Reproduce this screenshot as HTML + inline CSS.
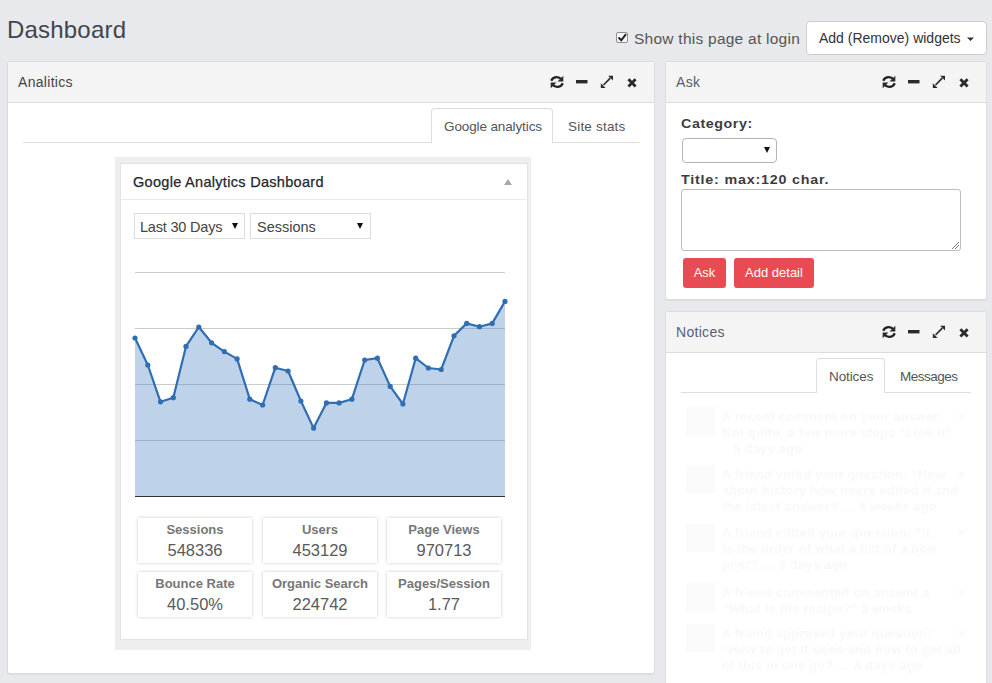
<!DOCTYPE html>
<html><head><meta charset="utf-8">
<style>
*{box-sizing:border-box;margin:0;padding:0}
html,body{width:992px;height:683px;overflow:hidden;background:#e8e9ec;font-family:"Liberation Sans",sans-serif;color:#333}
.abs{position:absolute;white-space:nowrap}
#title{left:7px;top:16px;font-size:24px;color:#41454d;line-height:28px;letter-spacing:0.2px}
#chk{left:616px;top:32px;width:12px;height:11px;border:1px solid #8f8f8f;border-radius:2px;background:#f6f6f6}
#showlbl{left:634px;top:30px;font-size:15.5px;color:#555;line-height:18px;letter-spacing:0.25px}
#addbtn{left:806px;top:21px;width:181px;height:34px;background:#fff;border:1px solid #ccc;border-radius:4px;font-size:14px;color:#333;line-height:18px;padding:7px 0 0 12px}
.panel{position:absolute;background:#fff;border:1px solid #dcdde0;border-radius:3px;box-shadow:0 1px 1px rgba(0,0,0,.05)}
.phead{position:absolute;left:0;top:0;right:0;height:41px;background:#f4f4f4;border-bottom:1px solid #dcdcdc;border-radius:3px 3px 0 0}
.ptitle{position:absolute;font-size:14px;line-height:16px;color:#444;letter-spacing:0.3px}
.tabline{position:absolute;height:1px;background:#dedede}
.tab{position:absolute;font-size:13.5px;line-height:16px;color:#555;letter-spacing:0.2px}
.tabbox{position:absolute;background:#fff;border:1px solid #dedede;border-bottom:none;border-radius:4px 4px 0 0}
.gabox{position:absolute;background:#fff;border:1px solid #e3e3e3}
.sel{position:absolute;background:#fff;border:1px solid #ddd}
.seltxt{position:absolute;font-size:14.5px;line-height:16px;color:#444}
.arrow{position:absolute;width:0;height:0;border-left:3.5px solid transparent;border-right:3.5px solid transparent;border-top:6px solid #111}
.stat{position:absolute;width:114px;height:45px;background:#fff;box-shadow:0 0 3px rgba(0,0,0,.22);text-align:center}
.stat .l{position:absolute;left:0;right:0;top:4px;font-size:13px;line-height:16px;font-weight:bold;color:#777}
.stat .v{position:absolute;left:0;right:0;top:22px;font-size:16.5px;line-height:20px;color:#5a5a5a}
.flbl{position:absolute;font-size:13px;font-weight:bold;color:#3c3c3c;line-height:16px;letter-spacing:0.5px;transform:scaleX(1.1);transform-origin:0 0}
.btnred{position:absolute;background:#e84b52;border-radius:3px;color:#fff;font-size:13px;line-height:16px;text-align:center}
.faint{position:absolute;background:#fbfbfb}
.ftxt{font-size:12.5px;line-height:16px;font-weight:bold;color:#f9f9f9;letter-spacing:0.4px}
</style></head><body>
<div id="title" class="abs">Dashboard</div>
<div id="chk" class="abs"></div>
<div id="showlbl" class="abs">Show this page at login</div>
<div id="addbtn" class="abs">Add (Remove) widgets</div>

<!-- Analytics panel -->
<div class="panel" style="left:7px;top:61px;width:648px;height:613px">
  <div class="phead"></div>
</div>
<div class="ptitle abs" style="left:18px;top:74px">Analitics</div>
<div class="tabline" style="left:23px;top:142px;width:616px"></div>
<div class="tabbox" style="left:431px;top:108px;width:122px;height:35px"></div>
<div class="tab abs" style="left:444px;top:119px;letter-spacing:-0.12px">Google analytics</div>
<div class="tab abs" style="left:568px;top:119px">Site stats</div>

<!-- GA widget -->
<div class="abs" style="left:115px;top:157px;width:416px;height:493px;background:#eeeeee"></div>
<div class="gabox" style="left:120px;top:163px;width:408px;height:477px"></div>
<div class="abs" style="left:121px;top:199px;width:405px;height:1px;background:#eaeaea"></div>
<div class="abs" style="left:133px;top:173px;font-size:14.5px;line-height:18px;color:#23282d;letter-spacing:0.3px;-webkit-text-stroke:0.25px #23282d">Google Analytics Dashboard</div>
<div class="abs" style="left:504px;top:179px;width:0;height:0;border-left:4.5px solid transparent;border-right:4.5px solid transparent;border-bottom:6px solid #a8a8a8"></div>
<div class="sel" style="left:134px;top:213px;width:111px;height:26px"></div>
<div class="seltxt abs" style="left:140px;top:219px;letter-spacing:-0.2px">Last 30 Days</div>
<div class="arrow" style="left:232px;top:223px"></div>
<div class="sel" style="left:250px;top:213px;width:121px;height:26px"></div>
<div class="seltxt abs" style="left:257px;top:219px">Sessions</div>
<div class="arrow" style="left:357px;top:223px"></div>

<div class="stat" style="left:138px;top:518px"><div class="l">Sessions</div><div class="v">548336</div></div>
<div class="stat" style="left:263px;top:518px"><div class="l">Users</div><div class="v">453129</div></div>
<div class="stat" style="left:387px;top:518px"><div class="l">Page Views</div><div class="v">970713</div></div>
<div class="stat" style="left:138px;top:572px"><div class="l">Bounce Rate</div><div class="v">40.50%</div></div>
<div class="stat" style="left:263px;top:572px"><div class="l">Organic Search</div><div class="v">224742</div></div>
<div class="stat" style="left:387px;top:572px"><div class="l">Pages/Session</div><div class="v">1.77</div></div>

<!-- Ask panel -->
<div class="panel" style="left:665px;top:61px;width:322px;height:239px">
  <div class="phead"></div>
</div>
<div class="ptitle abs" style="left:676px;top:74px;color:#556078">Ask</div>
<div class="flbl abs" style="left:681px;top:116px">Category:</div>
<div class="abs" style="left:682px;top:138px;width:95px;height:25px;border:1px solid #b5b5b5;border-radius:4px;background:#fff"></div>
<div class="arrow" style="left:764px;top:147px"></div>
<div class="flbl abs" style="left:681px;top:172px;letter-spacing:0.72px">Title: max:120 char.</div>
<div class="abs" style="left:681px;top:189px;width:280px;height:62px;border:1px solid #bdbdbd;border-radius:3px;background:#fff"></div>
<svg class="abs" style="left:950px;top:240px" width="10" height="10"><path d="M2,9 L9,2 M5,9 L9,5" stroke="#777" stroke-width="1"/></svg>
<div class="btnred" style="left:683px;top:258px;width:43px;height:30px;padding-top:7px">Ask</div>
<div class="btnred" style="left:734px;top:258px;width:80px;height:30px;padding-top:7px">Add detail</div>

<!-- Notices panel -->
<div class="panel" style="left:665px;top:311px;width:322px;height:400px">
  <div class="phead"></div>
</div>
<div class="ptitle abs" style="left:676px;top:324px;color:#556078">Notices</div>
<div class="tabline" style="left:681px;top:392px;width:290px"></div>
<div class="tabbox" style="left:816px;top:358px;width:69px;height:35px"></div>
<div class="tab abs" style="left:829px;top:369px;letter-spacing:-0.1px">Notices</div>
<div class="tab abs" style="left:900px;top:369px;letter-spacing:-0.5px">Messages</div>

<div class="faint" style="left:686px;top:407px;width:29px;height:29px"></div>
<div class="ftxt abs" style="left:722px;top:409px">A recent comment on your answer</div>
<div class="ftxt abs" style="left:722px;top:425px">Not quite, a few more steps “Link it”</div>
<div class="ftxt abs" style="left:722px;top:441px">&nbsp;&nbsp;&nbsp;5&nbsp;days&nbsp;ago</div>
<div class="ftxt abs" style="left:958px;top:409px">×</div>
<div class="faint" style="left:686px;top:465px;width:29px;height:29px"></div>
<div class="ftxt abs" style="left:722px;top:467px">A friend voted your question: “How</div>
<div class="ftxt abs" style="left:722px;top:483px">about history how users edited it and</div>
<div class="ftxt abs" style="left:722px;top:499px">the latest answer? … 4 weeks ago</div>
<div class="ftxt abs" style="left:958px;top:467px">×</div>
<div class="faint" style="left:686px;top:523px;width:29px;height:29px"></div>
<div class="ftxt abs" style="left:722px;top:525px">A friend edited your question: “It</div>
<div class="ftxt abs" style="left:722px;top:541px">Is the order of what a list of a bbq</div>
<div class="ftxt abs" style="left:722px;top:557px">post? … 3 days ago</div>
<div class="ftxt abs" style="left:958px;top:525px">×</div>
<div class="faint" style="left:686px;top:583px;width:29px;height:29px"></div>
<div class="ftxt abs" style="left:722px;top:585px">A friend commented on answer a</div>
<div class="ftxt abs" style="left:722px;top:601px">“What is the recipe?” 3 weeks</div>
<div class="ftxt abs" style="left:958px;top:585px">×</div>
<div class="faint" style="left:686px;top:624px;width:29px;height:29px"></div>
<div class="ftxt abs" style="left:722px;top:626px">A friend approved your question:</div>
<div class="ftxt abs" style="left:722px;top:642px">“How to get it done and how to get all</div>
<div class="ftxt abs" style="left:722px;top:658px">of this in one go? … 4 days ago</div>
<div class="ftxt abs" style="left:958px;top:626px">×</div>
<svg class="abs" style="left:0;top:0" width="992" height="683" viewBox="0 0 992 683">
  <!-- checkbox tick -->
  <path d="M618.5,37.5 L621.3,40.3 L626,34.2" fill="none" stroke="#222" stroke-width="2"/>
  <!-- caret -->
  <path d="M967,37.5 L974,37.5 L970.5,41 Z" fill="#333"/>
  <!-- chart -->
  <line x1="135" y1="272.5" x2="505" y2="272.5" stroke="#cccccc" stroke-width="1"/>
  <line x1="135" y1="328.5" x2="505" y2="328.5" stroke="#cccccc" stroke-width="1"/>
  <line x1="135" y1="384.5" x2="505" y2="384.5" stroke="#cccccc" stroke-width="1"/>
  <line x1="135" y1="440.5" x2="505" y2="440.5" stroke="#cccccc" stroke-width="1"/>
  <polygon points="135,496 135.0,338.0 147.8,365.0 160.5,401.8 173.3,397.7 186.0,346.4 198.8,327.0 211.6,342.8 224.3,351.6 237.1,358.9 249.8,399.2 262.6,405.0 275.3,367.7 288.1,371.0 300.9,401.0 313.6,428.1 326.4,402.9 339.1,402.9 351.9,399.2 364.7,360.0 377.4,358.2 390.2,386.4 402.9,404.0 415.7,358.2 428.4,368.0 441.2,369.5 454.0,335.8 466.7,323.4 479.5,326.7 492.2,323.4 505.0,301.4 505,496" fill="#3a78be" fill-opacity="0.33"/>
  <line x1="135" y1="496.5" x2="505" y2="496.5" stroke="#333" stroke-width="1"/>
  <polyline points="135.0,338.0 147.8,365.0 160.5,401.8 173.3,397.7 186.0,346.4 198.8,327.0 211.6,342.8 224.3,351.6 237.1,358.9 249.8,399.2 262.6,405.0 275.3,367.7 288.1,371.0 300.9,401.0 313.6,428.1 326.4,402.9 339.1,402.9 351.9,399.2 364.7,360.0 377.4,358.2 390.2,386.4 402.9,404.0 415.7,358.2 428.4,368.0 441.2,369.5 454.0,335.8 466.7,323.4 479.5,326.7 492.2,323.4 505.0,301.4" fill="none" stroke="#2f6eb3" stroke-width="2.2" stroke-linejoin="round"/>
  <g fill="#2f6eb3"><circle cx="135.0" cy="338.0" r="2.6"/><circle cx="147.8" cy="365.0" r="2.6"/><circle cx="160.5" cy="401.8" r="2.6"/><circle cx="173.3" cy="397.7" r="2.6"/><circle cx="186.0" cy="346.4" r="2.6"/><circle cx="198.8" cy="327.0" r="2.6"/><circle cx="211.6" cy="342.8" r="2.6"/><circle cx="224.3" cy="351.6" r="2.6"/><circle cx="237.1" cy="358.9" r="2.6"/><circle cx="249.8" cy="399.2" r="2.6"/><circle cx="262.6" cy="405.0" r="2.6"/><circle cx="275.3" cy="367.7" r="2.6"/><circle cx="288.1" cy="371.0" r="2.6"/><circle cx="300.9" cy="401.0" r="2.6"/><circle cx="313.6" cy="428.1" r="2.6"/><circle cx="326.4" cy="402.9" r="2.6"/><circle cx="339.1" cy="402.9" r="2.6"/><circle cx="351.9" cy="399.2" r="2.6"/><circle cx="364.7" cy="360.0" r="2.6"/><circle cx="377.4" cy="358.2" r="2.6"/><circle cx="390.2" cy="386.4" r="2.6"/><circle cx="402.9" cy="404.0" r="2.6"/><circle cx="415.7" cy="358.2" r="2.6"/><circle cx="428.4" cy="368.0" r="2.6"/><circle cx="441.2" cy="369.5" r="2.6"/><circle cx="454.0" cy="335.8" r="2.6"/><circle cx="466.7" cy="323.4" r="2.6"/><circle cx="479.5" cy="326.7" r="2.6"/><circle cx="492.2" cy="323.4" r="2.6"/><circle cx="505.0" cy="301.4" r="2.6"/></g>
  <g transform="translate(0,0)" fill="#2a2a2a" stroke="none">
<path d="M561.5,79.5 A6,6 0 0 0 551.2,80.8" fill="none" stroke="#222" stroke-width="2.2"/>
<path d="M563.3,75.8 L563.3,81.6 L557.6,81.6 Z"/>
<path d="M552.5,84.5 A6,6 0 0 0 562.8,83.2" fill="none" stroke="#222" stroke-width="2.2"/>
<path d="M550.7,88.2 L550.7,82.4 L556.4,82.4 Z"/>
<rect x="576" y="80" width="11.5" height="3.4"/>
<path d="M603.5,85 L610.3,78.2" stroke="#2a2a2a" stroke-width="1.7"/>
<path d="M613,75.8 L613,80.6 L608.2,75.8 Z"/>
<path d="M600.8,88 L600.8,83.2 L605.6,88 Z"/>
<path d="M628.4,79.2 L635.6,86.4 M635.6,79.2 L628.4,86.4" stroke="#2a2a2a" stroke-width="2.8"/>
</g>
  <g transform="translate(332,0)" fill="#2a2a2a" stroke="none">
<path d="M561.5,79.5 A6,6 0 0 0 551.2,80.8" fill="none" stroke="#222" stroke-width="2.2"/>
<path d="M563.3,75.8 L563.3,81.6 L557.6,81.6 Z"/>
<path d="M552.5,84.5 A6,6 0 0 0 562.8,83.2" fill="none" stroke="#222" stroke-width="2.2"/>
<path d="M550.7,88.2 L550.7,82.4 L556.4,82.4 Z"/>
<rect x="576" y="80" width="11.5" height="3.4"/>
<path d="M603.5,85 L610.3,78.2" stroke="#2a2a2a" stroke-width="1.7"/>
<path d="M613,75.8 L613,80.6 L608.2,75.8 Z"/>
<path d="M600.8,88 L600.8,83.2 L605.6,88 Z"/>
<path d="M628.4,79.2 L635.6,86.4 M635.6,79.2 L628.4,86.4" stroke="#2a2a2a" stroke-width="2.8"/>
</g>
  <g transform="translate(0,250)"><g transform="translate(332,0)" fill="#2a2a2a" stroke="none">
<path d="M561.5,79.5 A6,6 0 0 0 551.2,80.8" fill="none" stroke="#222" stroke-width="2.2"/>
<path d="M563.3,75.8 L563.3,81.6 L557.6,81.6 Z"/>
<path d="M552.5,84.5 A6,6 0 0 0 562.8,83.2" fill="none" stroke="#222" stroke-width="2.2"/>
<path d="M550.7,88.2 L550.7,82.4 L556.4,82.4 Z"/>
<rect x="576" y="80" width="11.5" height="3.4"/>
<path d="M603.5,85 L610.3,78.2" stroke="#2a2a2a" stroke-width="1.7"/>
<path d="M613,75.8 L613,80.6 L608.2,75.8 Z"/>
<path d="M600.8,88 L600.8,83.2 L605.6,88 Z"/>
<path d="M628.4,79.2 L635.6,86.4 M635.6,79.2 L628.4,86.4" stroke="#2a2a2a" stroke-width="2.8"/>
</g></g>
</svg>
</body></html>
